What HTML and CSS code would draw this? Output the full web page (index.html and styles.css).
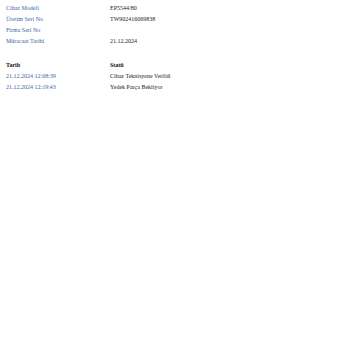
FILE: index.html
```html
<!DOCTYPE html>
<html>
<head><meta charset="utf-8"><link rel="stylesheet" href="styles.css"></head>
<body>
<div class="info">
  <div class="row"><span class="label">Cihaz Modeli</span><span class="value">EP5544/80</span></div>
  <div class="row"><span class="label">Üretim Seri No</span><span class="value">TW902416069838</span></div>
  <div class="row"><span class="label">Firma Seri No</span><span class="value"></span></div>
  <div class="row"><span class="label">Müracaat Tarihi</span><span class="value">21.12.2024</span></div>
</div>
<div class="history">
  <div class="row head"><span class="th">Tarih</span><span class="th">Statü</span></div>
  <div class="row"><span class="label">21.12.2024 12:08:39</span><span class="value">Cihaz Teknisyene Verildi</span></div>
  <div class="row"><span class="label">21.12.2024 12:19:43</span><span class="value">Yedek Parça Bekliyor</span></div>
</div>
</body>
</html>
```
FILE: styles.css
```css
body { margin: 0; padding: 3px 6px; font-family: "Liberation Serif", serif; font-size: 6px; color: #222; background: #fff; }
.row { display: grid; grid-template-columns: 104px 1fr; height: 11px; line-height: 11px; }
.label { color: #4165a8; }
.value { color: #222; }
.history { margin-top: 13px; }
.th { font-weight: bold; color: #111; }
```
